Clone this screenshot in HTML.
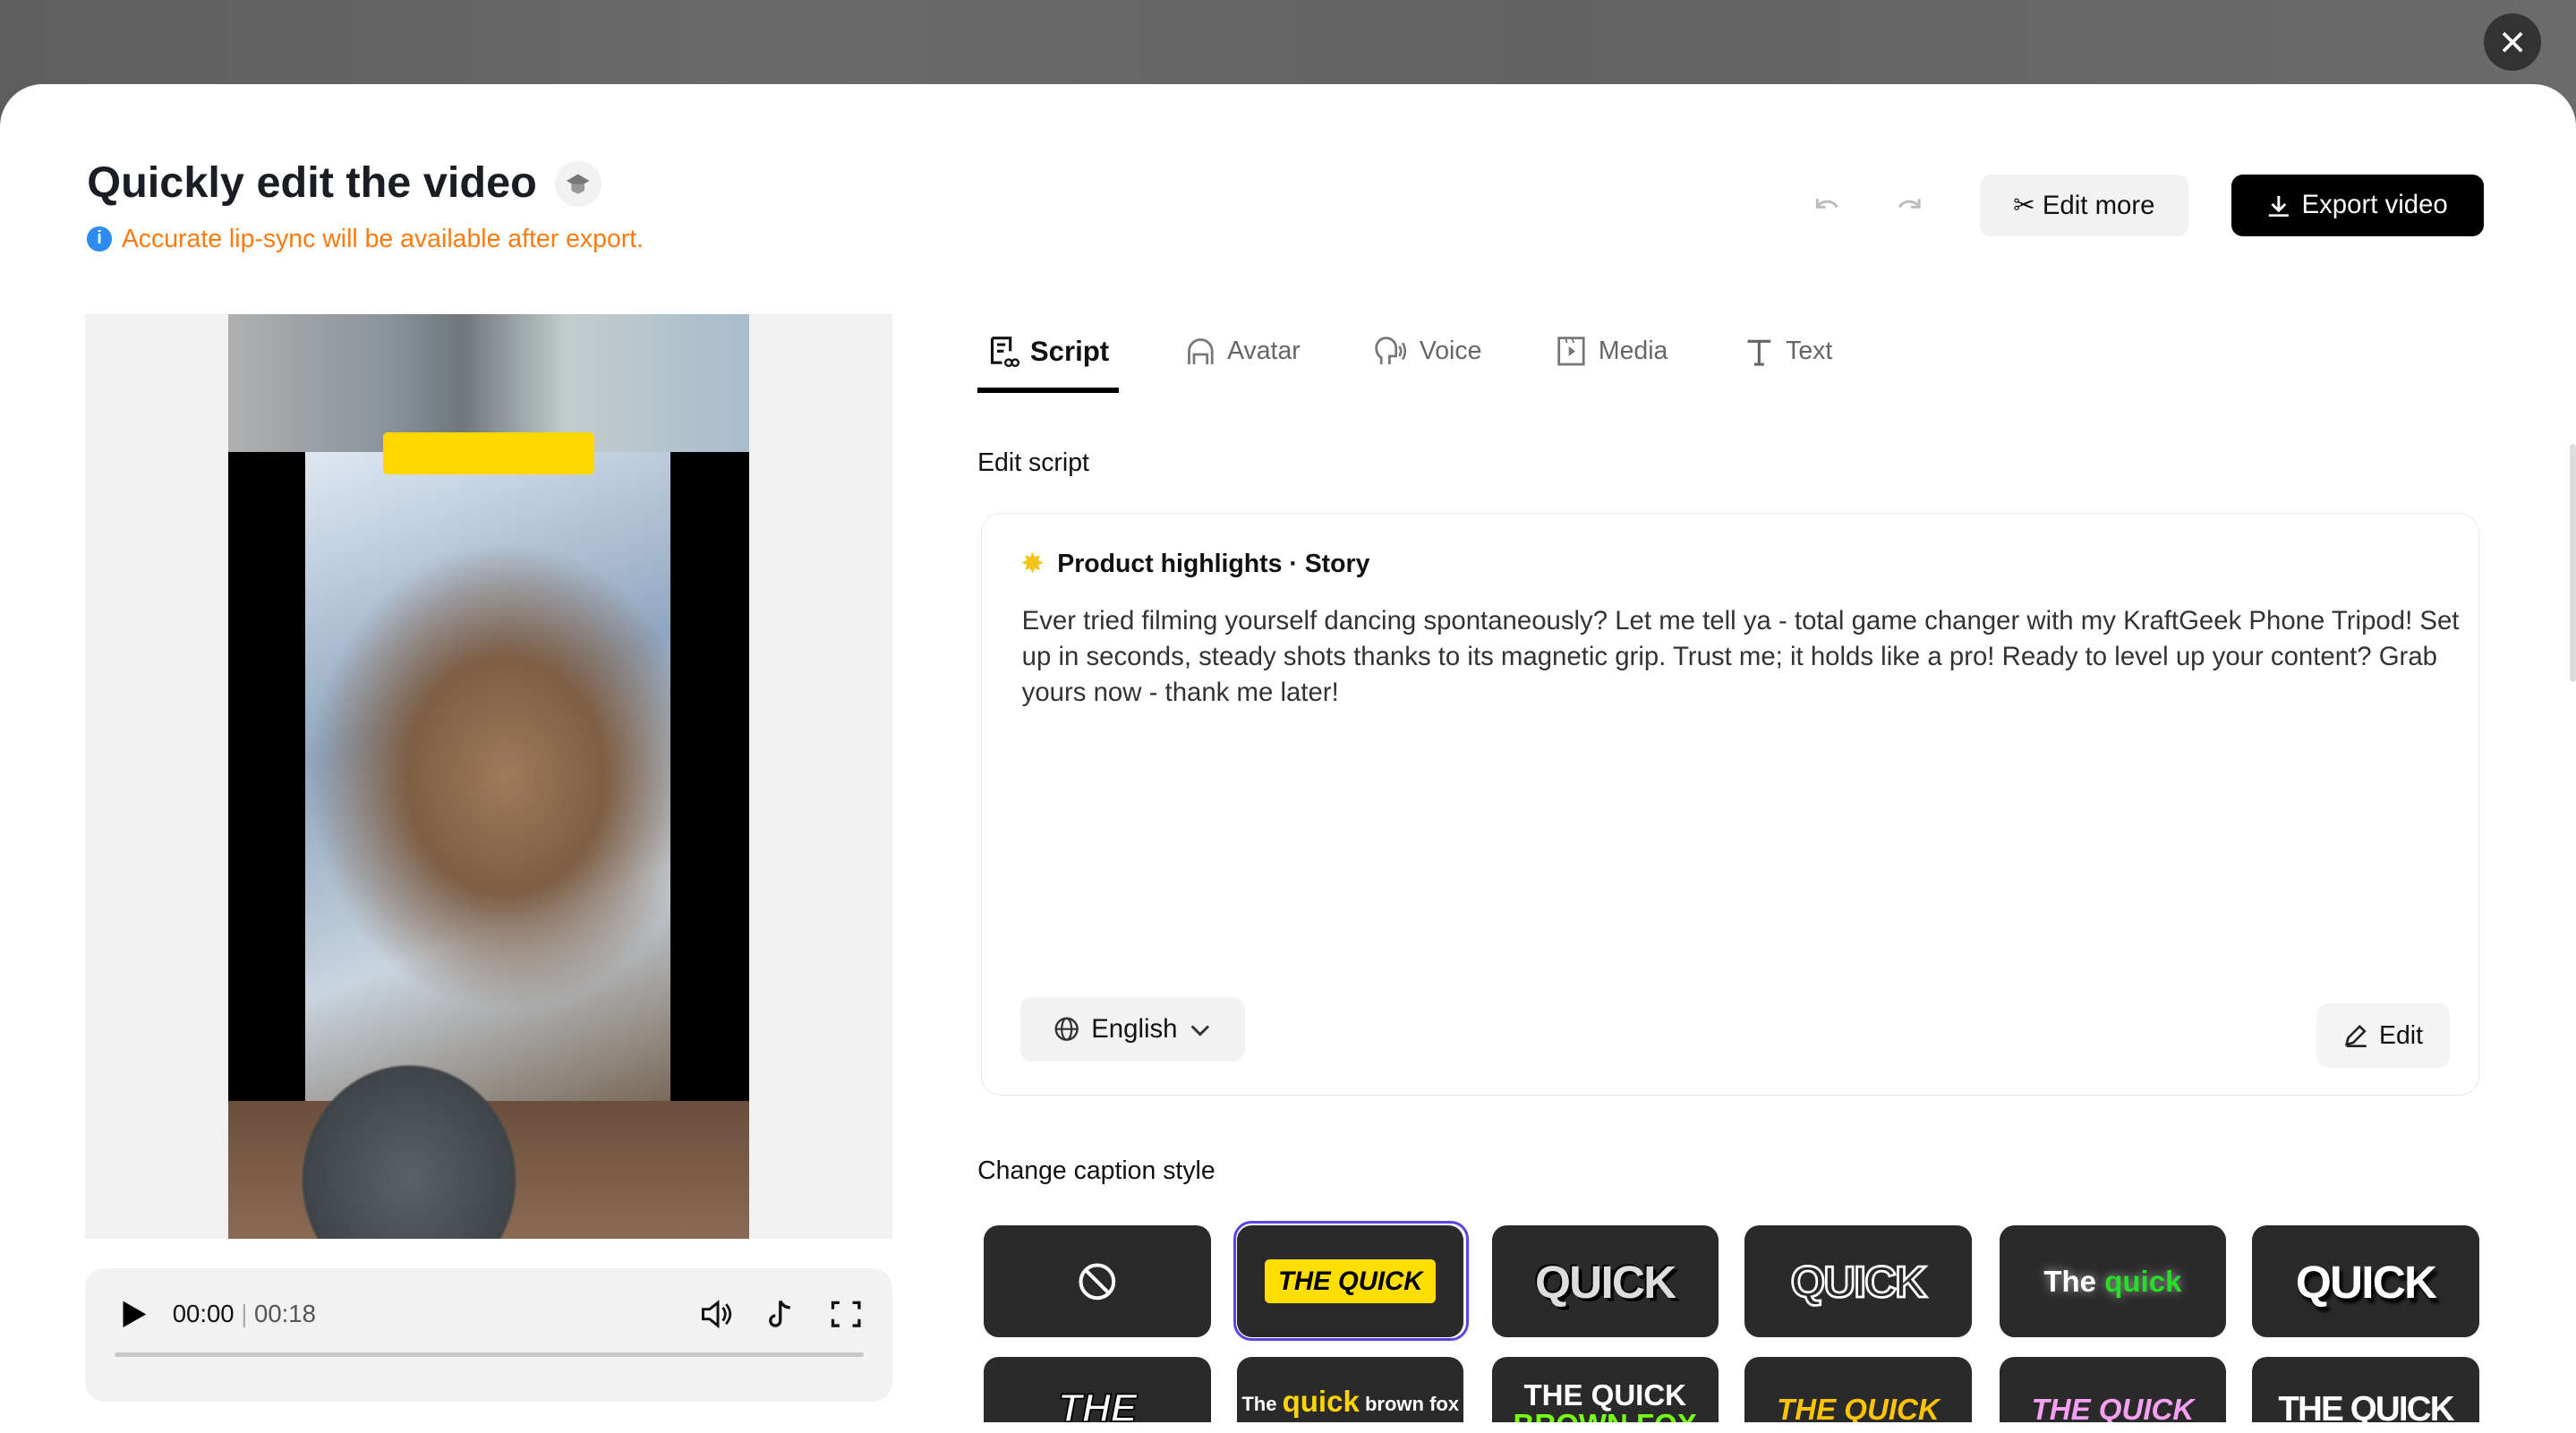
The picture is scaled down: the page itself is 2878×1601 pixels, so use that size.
<!DOCTYPE html>
<html><head><meta charset="utf-8"><style>
html,body{margin:0;padding:0;overflow:hidden;background:#666;}
#w{width:1568px;height:872px;position:relative;zoom:1.83546;font-family:"Liberation Sans",sans-serif;overflow:hidden;background:linear-gradient(90deg,#5e5e5e,#6a6a6a 30%,#636363 60%,#6b6b6b);}
.a{position:absolute;}
.modal{left:0;top:51px;width:1568px;height:830px;background:#fff;border-radius:26px 26px 0 0;}
.btn{display:flex;align-items:center;justify-content:center;gap:7px;border-radius:7px;font-size:15px;}
.tab{top:204px;font-size:15.5px;color:#666;display:flex;align-items:center;gap:6px;}
.tile{width:138px;height:68px;background:#2a2a2a;border-radius:9px;overflow:hidden;display:flex;align-items:center;justify-content:center;font-family:"Liberation Sans",sans-serif;font-weight:bold;}
</style></head><body><div id="w">
<div class="a" style="left:1512px;top:8px;width:35px;height:35px;border-radius:50%;background:#333;"><svg width="35" height="35"><path d="M12 12L23 23M23 12L12 23" stroke="#fff" stroke-width="2"/></svg></div>
<div class="a modal"></div>
<div class="a" style="left:53px;top:96px;font-size:26.5px;font-weight:bold;color:#1a1d24;">Quickly edit the video</div>
<div class="a" style="left:338px;top:98px;width:28px;height:28px;border-radius:50%;background:#f2f2f2;"><svg width="28" height="28"><path d="M7 12L14 8L21 12L14 16Z" fill="#777"/><path d="M10 14V18L14 20L18 18V14" fill="#999"/></svg></div>
<div class="a" style="left:53px;top:138px;width:15px;height:15px;border-radius:50%;background:#2e8cf0;color:#fff;font-size:11px;font-weight:bold;text-align:center;line-height:15px;">i</div>
<div class="a" style="left:74px;top:137px;font-size:15.5px;color:#ff7a0f;">Accurate lip-sync will be available after export.</div>
<svg class="a" style="left:1102px;top:116px" width="70" height="20"><path d="M4 5V10H9M4 10C6 6 13 5 16 10" fill="none" stroke="#bbb" stroke-width="1.6"/><path d="M66 5V10H61M66 10C64 6 57 5 54 10" fill="none" stroke="#bbb" stroke-width="1.6"/></svg>
<div class="a btn" style="left:1205px;top:106px;width:127px;height:38px;background:#f2f2f2;color:#111;font-size:16px;">✂ Edit more</div>
<div class="a btn" style="left:1358px;top:106px;width:154px;height:38px;background:#000;color:#fff;font-size:16px;"><svg width="14" height="14"><path d="M7 1V9M3 6L7 10L11 6M1 13H13" stroke="#fff" fill="none" stroke-width="1.6"/></svg>Export video</div>
<!-- video -->
<div class="a" style="left:52px;top:191px;width:491px;height:563px;background:#f1f1f1;"></div>
<div class="a" style="left:139px;top:191px;width:317px;height:563px;background:#000;overflow:hidden;">
 <div class="a" style="left:0;top:0;width:317px;height:84px;background:linear-gradient(90deg,#b0b0b0,#8a949b 30%,#6f777c 45%,#c3cccc 65%,#a9bccb);"></div>
 <div class="a" style="left:47px;top:84px;width:222px;height:395px;background:radial-gradient(ellipse 60% 40% at 55% 50%,#a07a5a 0%,#7e5e44 45%,transparent 90%),linear-gradient(160deg,#dfe8f2,#8fa6c0 40%,#c9d4de 70%,#7a6a5a);"></div>
 <div class="a" style="left:0;top:479px;width:317px;height:84px;background:linear-gradient(#6b4f3c,#8a6a55);"></div>
 <div class="a" style="left:30px;top:420px;width:160px;height:143px;background:radial-gradient(ellipse 50% 60% at 50% 75%,#5a6268,#3f4448 80%,transparent 82%);"></div>
 <div class="a" style="left:94px;top:72px;width:129px;height:26px;background:#ffd700;border-radius:3px;"></div>
</div>
<div class="a" style="left:52px;top:772px;width:491px;height:81px;background:#f2f2f2;border-radius:12px;"></div>
<svg class="a" style="left:72px;top:790px" width="20" height="20"><path d="M3 2L17 10L3 18Z" fill="#000"/></svg>
<div class="a" style="left:105px;top:791px;font-size:15px;color:#111;">00:00 <span style="color:#aaa">|</span> <span style="color:#555">00:18</span></div>
<svg class="a" style="left:425px;top:789px" width="100" height="22"><path d="M3 8H7L12 4V18L7 14H3Z" fill="none" stroke="#111" stroke-width="1.6"/><path d="M15 7Q18 11 15 15M17 5Q22 11 17 17" fill="none" stroke="#111" stroke-width="1.5"/><path d="M50 3V15A3 3 0 1 1 47 12M50 3Q52 7 56 7" fill="none" stroke="#111" stroke-width="1.8"/><path d="M82 8V4H86M94 4H98V8M98 14V18H94M86 18H82V14" fill="none" stroke="#111" stroke-width="1.8"/></svg>
<div class="a" style="left:70px;top:823px;width:456px;height:3px;background:#c8c8c8;border-radius:2px;"></div>
<!-- tabs -->
<div class="a tab" style="left:601px;color:#111;font-weight:bold;font-size:17px;"><svg width="20" height="20"><path d="M3 2H14V10M3 2V17H9M6 6H11M6 10H10" fill="none" stroke="#111" stroke-width="1.7"/><circle cx="13" cy="17" r="2" fill="none" stroke="#111" stroke-width="1.3"/><circle cx="17" cy="17" r="2" fill="none" stroke="#111" stroke-width="1.3"/></svg>Script</div>
<div class="a" style="left:595px;top:236px;width:86px;height:3px;background:#000;"></div>
<div class="a tab" style="left:721px;"><svg width="20" height="20"><path d="M3 18V10A7 7 0 0 1 17 10V18M6 18V12H14V18" fill="none" stroke="#777" stroke-width="1.5"/></svg>Avatar</div>
<div class="a tab" style="left:836px;"><svg width="22" height="20"><path d="M5 18V14Q2 12 2 8A6 6 0 0 1 14 8V13H10V18" fill="none" stroke="#777" stroke-width="1.5"/><path d="M16 7Q18 10 16 13M18 5Q21 10 18 15" fill="none" stroke="#777" stroke-width="1.4"/></svg>Voice</div>
<div class="a tab" style="left:947px;"><svg width="20" height="20"><rect x="2" y="2" width="15" height="16" fill="none" stroke="#777" stroke-width="1.5"/><path d="M8 7L12 10L8 13Z" fill="#777"/><path d="M6 2L7 5M10 2L11 5" stroke="#777"/></svg>Media</div>
<div class="a tab" style="left:1061px;"><svg width="20" height="20"><path d="M3 4H17M10 4V18M7 18H13" fill="none" stroke="#666" stroke-width="1.7"/></svg>Text</div>
<div class="a" style="left:595px;top:273px;font-size:15.5px;color:#111;">Edit script</div>
<div class="a" style="left:597px;top:312px;width:911px;height:354px;border:1px solid #e6e6e6;border-radius:12px;"></div>
<div class="a" style="left:622px;top:334px;font-size:15.5px;font-weight:bold;color:#111;"><span style="color:#f5c518">✸</span>&nbsp; Product highlights · Story</div>
<div class="a" style="left:622px;top:367px;width:882px;font-size:16px;line-height:22px;color:#333;">Ever tried filming yourself dancing spontaneously? Let me tell ya - total game changer with my KraftGeek Phone Tripod! Set up in seconds, steady shots thanks to its magnetic grip. Trust me; it holds like a pro! Ready to level up your content? Grab yours now - thank me later!</div>
<div class="a btn" style="left:621px;top:607px;width:137px;height:39px;background:#f2f2f2;color:#111;font-size:16px;"><svg width="16" height="16"><circle cx="8" cy="8" r="6.5" fill="none" stroke="#333" stroke-width="1.3"/><ellipse cx="8" cy="8" rx="3" ry="6.5" fill="none" stroke="#333" stroke-width="1.2"/><path d="M1.5 8H14.5" stroke="#333" stroke-width="1.2"/></svg>English <svg width="14" height="10"><path d="M2 3L7 8L12 3" fill="none" stroke="#333" stroke-width="1.6"/></svg></div>
<div class="a btn" style="left:1410px;top:611px;width:81px;height:39px;background:#f4f4f4;color:#111;font-size:15.5px;"><svg width="15" height="15"><path d="M2 13L3 9L10 2L13 5L6 12Z M2 14H14" fill="none" stroke="#222" stroke-width="1.4"/></svg>Edit</div>
<div class="a" style="left:595px;top:704px;font-size:15.5px;color:#111;">Change caption style</div>
<div class="a" style="left:751px;top:743px;width:140px;height:70px;border:2px solid #5b45e0;border-radius:11px;"></div>
<div class="a tile" style="left:599px;top:746px;"><svg width="26" height="26"><circle cx="13" cy="13" r="10" fill="none" stroke="#fff" stroke-width="2.2"/><path d="M6 6L20 20" stroke="#fff" stroke-width="2.2"/></svg></div>
<div class="a tile" style="left:753px;top:746px;"><div style="background:#ffde00;color:#000;font-style:italic;font-size:16px;padding:4px 8px;border-radius:3px;">THE QUICK</div></div>
<div class="a tile" style="left:908px;top:746px;color:#ddd;font-size:28px;letter-spacing:-1px;text-shadow:2px 2px 0 #000,-1px -1px 0 #000;">QUICK</div>
<div class="a tile" style="left:1062px;top:746px;color:#2a2a2a;font-size:27px;letter-spacing:-1px;-webkit-text-stroke:1.5px #fff;">QUICK</div>
<div class="a tile" style="left:1217px;top:746px;font-size:18px;color:#fff;text-shadow:0 0 6px #aaa;">The&nbsp;<span style="color:#22e022">quick</span></div>
<div class="a tile" style="left:1371px;top:746px;color:#fff;font-size:28px;letter-spacing:-1px;text-shadow:2px 3px 2px #000;">QUICK</div>
<div style="position:absolute;left:0;top:826px;width:1568px;height:40px;overflow:hidden;">
<div class="a tile" style="left:599px;top:0;align-items:flex-start;padding-top:18px;box-sizing:border-box;color:#fff;font-size:24px;font-style:italic;-webkit-text-stroke:1px #000;">THE</div>
<div class="a tile" style="left:753px;top:0;align-items:flex-start;padding-top:22px;box-sizing:border-box;color:#fff;font-size:12px;">The&nbsp;<span style="color:#ffd400;font-size:18px;margin-top:-5px">quick</span>&nbsp;brown fox</div>
<div class="a tile" style="left:908px;top:0;flex-direction:column;justify-content:flex-start;padding-top:14px;box-sizing:border-box;color:#fff;font-size:18px;line-height:18px;">THE QUICK<span style="color:#7f1">BROWN FOX</span></div>
<div class="a tile" style="left:1062px;top:0;align-items:flex-start;padding-top:22px;box-sizing:border-box;color:#ffc400;font-style:italic;font-size:18px;">THE QUICK</div>
<div class="a tile" style="left:1217px;top:0;align-items:flex-start;padding-top:22px;box-sizing:border-box;color:#f5a0f0;font-style:italic;font-size:18px;">THE QUICK</div>
<div class="a tile" style="left:1371px;top:0;align-items:flex-start;padding-top:20px;box-sizing:border-box;color:#fff;font-size:21px;letter-spacing:-1px;">THE QUICK</div>
</div>
<div class="a" style="left:0;top:866px;width:1568px;height:10px;background:#fff;"></div>
<div class="a" style="left:1564px;top:270px;width:4px;height:145px;background:#ddd;border-radius:2px;"></div>
</div></body></html>
